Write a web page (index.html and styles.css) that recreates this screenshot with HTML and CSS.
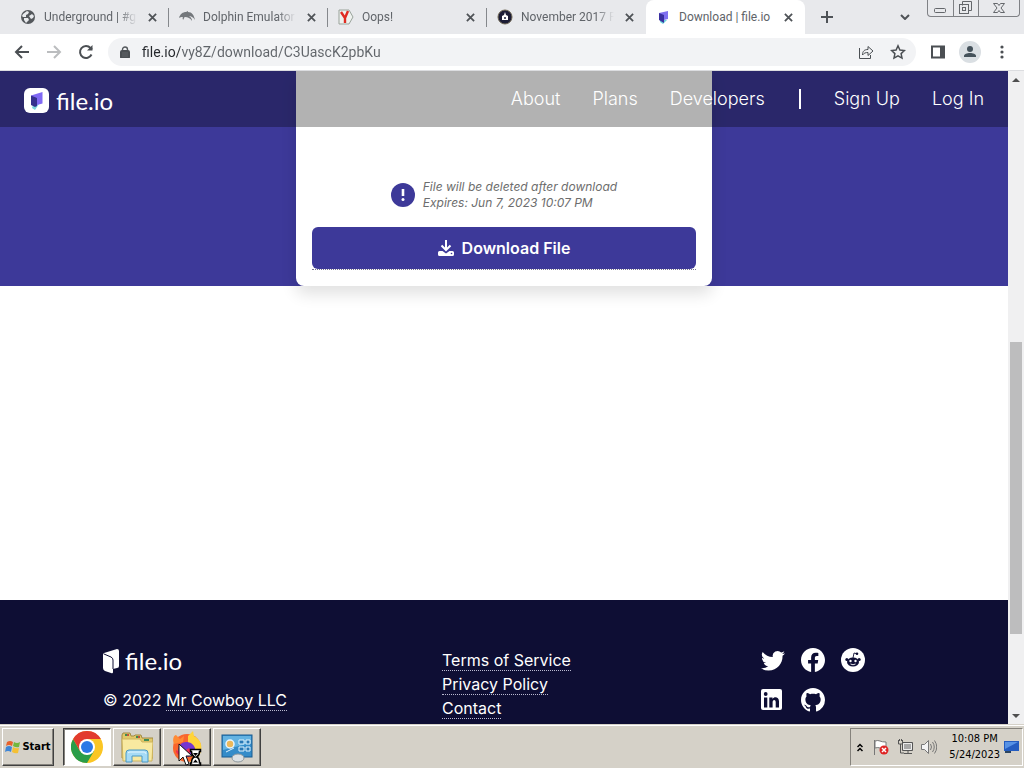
FILE: index.html
```html
<!DOCTYPE html>
<html lang="en">
<head>
<meta charset="utf-8">
<meta name="viewport" content="width=device-width, initial-scale=1">
<title>Download | file.io</title>
<link rel="stylesheet" href="styles.css">
</head>
<body>
<div class="browser">
  <div class="tabstrip">
    <div class="tabs">
      <div class="tab">
        <svg class="favicon" viewBox="0 0 16 16" aria-hidden="true"><circle cx="8" cy="8" r="7" fill="#54585c"/><path d="M3 5l4-3 2 1-1 2-2 1 0 2H3l-1-1zM9 7l3-2 2 2-1 2-2 1zM4 9l4 0 1 2-2 2-1 1-2-3z" fill="#e8eaed"/></svg>
        <a class="tab-title" href="#">Underground | #g</a>
        <button class="tab-close" aria-label="Close tab"><svg viewBox="0 0 10 10"><path d="M1 1l8 8M9 1l-8 8"/></svg></button>
      </div>
      <div class="tab">
        <svg class="favicon" viewBox="0 0 16 16" aria-hidden="true"><path d="M0 9c1-4 4-6 7-6l2-1 0 1c4 0 6 3 7 8-2-3-4-4-6-4 2 1 3 3 3 5-2-3-4-4-7-4-1 0-1 2-2 3 0-1-1-2 0-3-2 0-3 0-4 1z" fill="#74787c"/></svg>
        <a class="tab-title" href="#">Dolphin Emulator</a>
        <button class="tab-close" aria-label="Close tab"><svg viewBox="0 0 10 10"><path d="M1 1l8 8M9 1l-8 8"/></svg></button>
      </div>
      <div class="tab">
        <svg class="favicon" viewBox="0 0 16 16" aria-hidden="true"><path d="M1 1h10l4 7-4 7H1z" fill="#eef1ee" stroke="#9aa39b"/><path d="M3 3l4 6M10 2L7 9v5" fill="none" stroke="#e02b22" stroke-width="2.4"/></svg>
        <a class="tab-title" href="#">Oops!</a>
        <button class="tab-close" aria-label="Close tab"><svg viewBox="0 0 10 10"><path d="M1 1l8 8M9 1l-8 8"/></svg></button>
      </div>
      <div class="tab">
        <svg class="favicon" viewBox="0 0 16 16" aria-hidden="true"><circle cx="8" cy="8" r="7" fill="#1c1c35" stroke="#6d6552"/><path d="M8 3l1 3 2 1v4H5V7l2-1z" fill="#fff"/><circle cx="8" cy="9" r="1" fill="#1c1c35"/></svg>
        <a class="tab-title" href="#">November 2017 F</a>
        <button class="tab-close" aria-label="Close tab"><svg viewBox="0 0 10 10"><path d="M1 1l8 8M9 1l-8 8"/></svg></button>
      </div>
      <div class="tab active">
        <svg class="favicon" viewBox="0 0 16 16" aria-hidden="true"><path d="M4 11l7 0-4 4-3-2z" fill="#6fd3dd"/><path d="M3 4l9-2v8l-4 1z" fill="#7f6ff0"/><path d="M3 4l5 2v8l-5-3z" fill="#3a2fa0"/></svg>
        <a class="tab-title" href="#">Download | file.io</a>
        <button class="tab-close" aria-label="Close tab"><svg viewBox="0 0 10 10"><path d="M1 1l8 8M9 1l-8 8"/></svg></button>
      </div>
    </div>
    <button class="new-tab" aria-label="New tab"><svg viewBox="0 0 12 12"><path d="M6 0v12M0 6h12"/></svg></button>
    <button class="tab-search" aria-label="Search tabs"><svg viewBox="0 0 10 6"><path d="M1 1l4 4 4-4"/></svg></button>
    <div class="window-controls">
      <button aria-label="Minimize"><svg viewBox="0 0 24 16"><rect x="5.500" y="8.500" width="11" height="4" rx="1"/></svg></button>
      <button aria-label="Restore"><svg viewBox="0 0 24 16"><path d="M8.500 5.500v-4h9v9h-3"/><rect x="5.500" y="4.500" width="9" height="9"/><rect x="8.500" y="7.500" width="3" height="3"/></svg></button>
      <button class="win-close" aria-label="Close"><svg viewBox="0 0 24 16"><path d="M6.500 3.500h4l1.500 2 1.500-2h4l-3.500 4.500 3.500 4.500h-4l-1.500-2-1.500 2h-4l3.500-4.500z"/></svg></button>
    </div>
  </div>

  <div class="toolbar">
    <button aria-label="Back"><svg viewBox="0 0 16 16"><path d="M15 8H2M8 2L2 8l6 6"/></svg></button>
    <button class="disabled" aria-label="Forward"><svg viewBox="0 0 16 16"><path d="M1 8h13M8 2l6 6-6 6"/></svg></button>
    <button aria-label="Reload"><svg viewBox="0 0 16 16"><path d="M13.500 10.500A6 6 0 1 1 12.500 4L14 5.500"/><path d="M14.500 1v5.500H9z" fill="#4b4f53" stroke="none"/></svg></button>
    <div class="omnibox">
      <svg class="lock" viewBox="0 0 10 12" aria-hidden="true"><path d="M2.500 5V3.500a2.500 2.500 0 0 1 5 0V5" fill="none" stroke="#55595d" stroke-width="1.400"/><rect x="1" y="5" width="8" height="7" rx="1" fill="#55595d"/></svg>
      <input type="text" aria-label="Address" value="file.io/vy8Z/download/C3UascK2pbKu">
      <button aria-label="Share"><svg class="thin" viewBox="0 0 16 16"><path d="M1.500 4v10.500h11V11M4.500 11c0-4 2-5.500 5.500-5.500V2.500L15 7l-5 4.500V8.500c-2.500 0-4 .5-5.500 2.500z"/></svg></button>
      <button aria-label="Bookmark"><svg class="star" viewBox="0 0 16 16"><path d="M8 1.800l1.900 4.200 4.500.5-3.300 3.100.9 4.500L8 11.800l-4 2.300.9-4.500L1.600 6.500 6.100 6z"/></svg></button>
    </div>
    <button aria-label="Side panel"><svg viewBox="0 0 16 16"><path d="M2 2.500h12v11H2z"/><path d="M10 2h5v12h-5z" fill="#4b4f53" stroke="none"/></svg></button>
    <button class="profile" aria-label="Profile"><svg viewBox="0 0 22 22"><circle cx="11" cy="11" r="11" fill="#dadfe3"/><circle cx="11" cy="8" r="3" fill="#45525b"/><path d="M5 16v-1c0-4 12-4 12 0v1z" fill="#45525b"/></svg></button>
    <button class="menu" aria-label="Menu"><svg viewBox="0 0 16 16"><g fill="#4b4f53" stroke="none"><circle cx="8" cy="3" r="1.600"/><circle cx="8" cy="8" r="1.600"/><circle cx="8" cy="13" r="1.600"/></g></svg></button>
  </div>

  <div class="viewport">
    <div class="page">
      <header class="site-header">
        <a class="brand header-brand" href="#">
          <svg class="brand-mark" viewBox="0 0 26 26" aria-hidden="true"><rect width="25" height="25" rx="6" fill="#fff"/><path d="M9 17l6-1-4 6-3-2z" fill="#7bd6dc"/><path d="M7 7.500L18.500 4v11.500L13 17z" fill="#8069f4"/><path d="M7 7.500l6 2.500v8l-2 1-4-2z" fill="#35308d"/></svg>
          <span>file.io</span>
        </a>
        <nav class="site-nav">
          <a href="#">About</a>
          <a href="#">Plans</a>
          <a href="#">Developers</a>
          <span class="divider"></span>
          <a href="#">Sign Up</a>
          <a href="#">Log In</a>
        </nav>
      </header>

      <main>
        <section class="hero">
          <div class="card">
            <div class="notice">
              <svg viewBox="0 0 24 24" aria-hidden="true"><circle cx="12" cy="12" r="12" fill="#3d3999"/><path d="M12 6v7" stroke="#fff" stroke-width="2.600"/><circle cx="12" cy="16.500" r="1.500" fill="#fff"/></svg>
              <p>File will be deleted after download<br>Expires: Jun 7, 2023 10:07 PM</p>
            </div>
            <a class="download-link" href="#">
              <svg viewBox="0 0 16 16" aria-hidden="true"><path d="M8 0v10M3.500 5.500L8 10l4.500-4.500" fill="none" stroke="#fff" stroke-width="2"/><path d="M1.500 11h3L8 13.500 11.500 11h3a1.500 1.500 0 0 1 1.500 1.500v2a1.500 1.500 0 0 1-1.500 1.500h-13A1.500 1.500 0 0 1 0 14.500v-2A1.500 1.500 0 0 1 1.500 11z" fill="#fff"/><circle cx="13.500" cy="13.500" r=".8" fill="#3d3999"/></svg>
              Download File
            </a>
          </div>
        </section>
      </main>

      <footer class="site-footer">
        <div class="company">
          <a class="brand footer-brand" href="#">
            <svg viewBox="0 0 17 25" aria-hidden="true"><path d="M1 4l13-4q2 0 2 2v15q0 2-2 2l-4 1v3q0 2-2 1l-6-2q-2-1-2-3V6q0-1 1-2z" fill="#fff"/><path d="M1 5l7 3q2 1 2 3v9" fill="none" stroke="#0e0e34"/></svg>
            <span>file.io</span>
          </a>
          <p>© 2022 <a class="dotted" href="#">Mr Cowboy LLC</a></p>
        </div>
        <ul class="legal">
          <li><a class="dotted" href="#">Terms of Service</a></li>
          <li><a class="dotted" href="#">Privacy Policy</a></li>
          <li><a class="dotted" href="#">Contact</a></li>
        </ul>
        <div class="social">
          <a href="#" aria-label="Twitter"><svg viewBox="0 0 16 16"><path d="M5.026 15c6.038 0 9.341-5.003 9.341-9.334 0-.14 0-.282-.006-.422A6.685 6.685 0 0 0 16 3.542a6.658 6.658 0 0 1-1.889.518 3.301 3.301 0 0 0 1.447-1.817 6.533 6.533 0 0 1-2.087.793A3.286 3.286 0 0 0 7.875 6.03a9.325 9.325 0 0 1-6.767-3.429 3.289 3.289 0 0 0 1.018 4.382A3.323 3.323 0 0 1 .64 6.575v.045a3.288 3.288 0 0 0 2.632 3.218 3.203 3.203 0 0 1-.865.115 3.23 3.23 0 0 1-.614-.057 3.283 3.283 0 0 0 3.067 2.277A6.588 6.588 0 0 1 .78 13.58a6.32 6.32 0 0 1-.78-.045A9.344 9.344 0 0 0 5.026 15z"/></svg></a>
          <a href="#" aria-label="Facebook"><svg viewBox="0 0 16 16"><path d="M16 8.049c0-4.446-3.582-8.05-8-8.05C3.58 0-.002 3.603-.002 8.05c0 4.017 2.926 7.347 6.75 7.951v-5.625h-2.03V8.05H6.75V6.275c0-2.017 1.195-3.131 3.022-3.131.876 0 1.791.157 1.791.157v1.98h-1.009c-.993 0-1.303.621-1.303 1.258v1.51h2.218l-.354 2.326H9.25V16c3.824-.604 6.75-3.934 6.75-7.951z"/></svg></a>
          <a href="#" aria-label="Reddit"><svg viewBox="0 0 24 24"><circle cx="12" cy="12" r="12"/><g fill="#0e0e34"><ellipse cx="12" cy="14" rx="6" ry="4.500"/><circle cx="5.800" cy="11.500" r="1.500"/><circle cx="18.200" cy="11.500" r="1.500"/><circle cx="16" cy="5.800" r="1.300"/></g><path d="M12 10l1-5 3 .8" fill="none" stroke="#0e0e34" stroke-width=".9"/><circle cx="9.500" cy="13" r="1.200"/><circle cx="14.500" cy="13" r="1.200"/><path d="M9.500 16q2.500 1.500 5 0" fill="none" stroke="#fff" stroke-width=".9"/></svg></a>
          <a href="#" aria-label="LinkedIn"><svg viewBox="0 0 24 24"><rect x="0" y="1" width="21" height="21" rx="2"/><g fill="#0e0e34"><circle cx="4.700" cy="6" r="1.900"/><path d="M3 9.500h3.300V19.500H3zM8.300 9.500h3.200v1.400c1.600-2.600 6.500-2.200 6.500 2.400v6.200h-3.300v-5.300c0-3-3.100-2.600-3.100 0v5.300H8.300z"/></g></svg></a>
          <a href="#" aria-label="GitHub"><svg viewBox="0 0 16 16"><path d="M8 0C3.580 0 0 3.580 0 8c0 3.540 2.290 6.530 5.470 7.590.4.070.55-.17.55-.38 0-.19-.01-.82-.01-1.490-2.010.37-2.530-.49-2.690-.94-.09-.23-.48-.94-.82-1.130-.28-.15-.68-.52-.01-.53.63-.01 1.080.58 1.230.82.72 1.210 1.870.87 2.330.66.07-.52.28-.87.51-1.070-1.780-.2-3.640-.89-3.640-3.950 0-.87.31-1.590.82-2.150-.08-.2-.36-1.020.08-2.120 0 0 .67-.21 2.200.82.64-.18 1.320-.27 2-.27.68 0 1.360.09 2 .27 1.530-1.040 2.200-.82 2.200-.82.44 1.100.16 1.920.08 2.120.51.56.82 1.270.82 2.150 0 3.070-1.870 3.750-3.650 3.950.29.25.54.73.54 1.480 0 1.070-.01 1.930-.01 2.200 0 .21.15.46.55.38A8.012 8.012 0 0 0 16 8c0-4.420-3.580-8-8-8z"/></svg></a>
        </div>
      </footer>
    </div>
    <div class="scrollbar">
      <button aria-label="Scroll up"><svg viewBox="0 0 8 4"><path d="M0 4l4-4 4 4z"/></svg></button>
      <div class="track-above"></div>
      <div class="thumb"></div>
      <div class="track-below"></div>
      <button aria-label="Scroll down"><svg viewBox="0 0 8 4"><path d="M0 0l4 4 4-4z"/></svg></button>
    </div>
  </div>
</div>

<div class="taskbar">
  <button class="start">
    <svg viewBox="0 0 16 16" aria-hidden="true"><path d="M2 3q3-2 6 0L7 7Q4 5 1 7z" fill="#e8622c"/><path d="M9 3q3 2 6 0l-1 5q-3 1-6-1z" fill="#72b83e"/><path d="M1 8q3-2 6 0l-1 5q-3-2-6 0z" fill="#3f86d6"/><path d="M8 8q3 2 6 1l-1 5q-3 1-6-1z" fill="#f4c034"/></svg>
    Start
  </button>
  <div class="tasks">
    <button class="task current" aria-label="Google Chrome"><svg viewBox="0 0 32 32"><circle cx="16" cy="16" r="16" fill="#fbc624"/><path d="M2.140 8A16 16 0 0 0 16 32l7-12-7-4-7 4z" fill="#2a9d49"/><path d="M2.140 8L9 20l7-12h13.860A16 16 0 0 0 2.140 8z" fill="#e23b2e"/><circle cx="16" cy="16" r="8" fill="#fff"/><circle cx="16" cy="16" r="6" fill="#2b78e6"/></svg></button>
    <button class="task" aria-label="File Explorer"><svg viewBox="0 0 32 32"><path d="M1 4l1-2h7l1 3h3l1-1h6l1 3h11v20H1z" fill="#e2c869" stroke="#a18a42"/><path d="M4 4h4M15 6h4M23 9h5" stroke="#3c8b57" stroke-width="2"/><path d="M6 4h2M17 6h2" stroke="#c5533d" stroke-width="2"/><path d="M1 8h18l2 3h11l-1 19H2z" fill="#f8e9a0" stroke="#cdb45f"/><path d="M5 31V22q0-3 3-3h16q3 0 3 3v9h-6v-6H11v6z" fill="#a6dbf5" stroke="#4998c5"/><path d="M7 22q1-1 2-1h14q2 0 2 2" fill="none" stroke="#e3f6ff"/></svg></button>
    <button class="task" aria-label="Firefox"><svg viewBox="0 0 32 32"><circle cx="16" cy="17" r="14" fill="#f9652d"/><path d="M17 5l5-5 1 5c7 4 9 10 6 18-2 4-5 7-10 8 6-9 5-16-2-19z" fill="#ffd43a"/><path d="M3 13c-2-5 0-9 2-9l4 4 4-3-1 6z" fill="#ff8b35"/><path d="M9 14c3-5 13-4 15 3 1 6-6 11-12 8-5-2-6-7-3-11z" fill="#7636cf"/><path d="M5 19c5 3 9 1 13-2l2 3c-3 6-12 7-15 1z" fill="#ed3053"/></svg></button>
    <button class="task" aria-label="Control Panel"><svg viewBox="0 0 32 32"><rect x="1" y="4" width="30" height="22" fill="#358cc9" stroke="#1a5c91"/><path d="M2 5h28v7L2 19z" fill="#64b3e2"/><circle cx="9" cy="13" r="4" fill="#edb85a" stroke="#e7f6ff" stroke-width="1.500"/><path d="M5 21l8-4M18 9h5v4h-5zM25 9h4v4h-4zM18 16h5v4h-5zM25 16h4v4h-4z" fill="#2878b5" stroke="#dff3ff"/><ellipse cx="17" cy="27" rx="6" ry="4" fill="#dce1e4" stroke="#8d969b"/></svg></button>
    <svg class="cursor" viewBox="0 0 24 24" aria-hidden="true"><path d="M1 0v17l4-4 3 8 3-1-3-8h6z" fill="#fff" stroke="#111"/><path d="M12.500 5.500h10v2h-1q0 4-3 5.500 3 1 3 6h1v2h-10v-2h1q0-5 3-6-3-1.500-3-5.500h-1z" fill="#fff" stroke="#000" stroke-width="1.500"/><path d="M15 9h5l-2.500 3zM15 18.500l2.500-3 2.500 3z"/></svg>
  </div>
  <div class="tray">
    <button aria-label="Show hidden icons"><svg class="chevrons" viewBox="0 0 6 9"><path d="M.5 4L3 1.500 5.500 4M.5 8L3 5.500 5.500 8"/></svg></button>
    <button aria-label="Action Center"><svg viewBox="0 0 16 16"><path d="M1.500 1v15M2 2q3-1 5 0t6 1v7q-4 0-6-1T2 9z" fill="#fff" stroke="#777"/><circle cx="11" cy="11" r="4.500" fill="#df2525"/><path d="M9 9l4 4M13 9l-4 4" stroke="#fff" stroke-width="1.500"/></svg></button>
    <button aria-label="Network"><svg viewBox="0 0 16 16"><path d="M5.500 3.500h10v8h-10z" fill="#a8a8a8" stroke="#555"/><path d="M6.500 4.500h8v6h-8z" fill="none" stroke="#eee"/><path d="M7 14.500h8M11 12v2M1.500 1v4h4V1M3.500 5v9H7M2.500 0v2M4.500 0v2" fill="none" stroke="#555"/></svg></button>
    <button aria-label="Volume"><svg viewBox="0 0 16 16"><path d="M.5 5.500h3l4-4v13l-4-4h-3z" fill="#f3f3f3" stroke="#777"/><path d="M9.500 5q2 3 0 6M11.500 3q3.500 5 0 10M13.500 1.500q4.500 6.500 0 13" fill="none" stroke="#777"/></svg></button>
    <time class="clock">10:08 PM<br>5/24/2023</time>
    <button class="show-desktop" aria-label="Show desktop"><svg viewBox="0 0 15 12"><path d="M0 0h15v10H0z" fill="#245cc0"/><path d="M1 1h13L1 8z" fill="#5792e5"/><path d="M1 11h6" stroke="#2d455f" stroke-width="2"/></svg></button>
  </div>
</div>
</body>
</html>
```

FILE: styles.css
```css
* { box-sizing: border-box; }

body {
  margin: 0;
  display: flex;
  flex-direction: column;
  height: 100vh;
  overflow: hidden;
  font-family: Inter, "Liberation Sans", sans-serif;
  background: #fff;
}

button {
  display: flex;
  align-items: center;
  justify-content: center;
  padding: 0;
  border: 0;
  background: none;
  font: inherit;
  color: inherit;
}

a { color: inherit; text-decoration: none; }
svg { display: block; flex: none; }

.browser { flex: 1; min-height: 0; display: flex; flex-direction: column; }

/* Tab strip */
.tabstrip {
  display: flex;
  height: 34px;
  padding-left: 10px;
  padding-right: 4px;
  background: #e8e9ec;
  color: #606469;
  font: 12px/16px Roboto, "Noto Sans", sans-serif;
}
.tabs { display: flex; flex: 0 1 795px; min-width: 0; }
.tab {
  position: relative;
  flex: 1;
  min-width: 0;
  display: flex;
  align-items: center;
  gap: 8px;
  padding: 0 10px;
}
.tab:not(.active)::after {
  content: "";
  position: absolute;
  right: 0;
  top: 8px;
  width: 1px;
  height: 19px;
  background: #85888c;
}
.tab:nth-last-child(2)::after { display: none; }
.tab.active { background: #fff; border-radius: 8px 8px 0 0; }
.favicon { width: 16px; height: 16px; }
.tab-title {
  flex: 1;
  min-width: 0;
  overflow: hidden;
  white-space: nowrap;
  mask-image: linear-gradient(to right, #000 80%, transparent);
}
.tab.active { gap: 7px; }
.active .tab-title { mask-image: none; }
.tab-close { width: 14px; height: 16px; }
.tab-close svg { width: 9px; height: 9px; }
.tab-close svg, .new-tab svg, .tab-search svg { fill: none; stroke: #4f5357; stroke-width: 2; }
.new-tab { width: 44px; }
.new-tab svg { width: 12px; height: 12px; }
.tab-search { width: 30px; margin-left: auto; }
.tab-search svg { width: 10px; height: 6px; }
.window-controls {
  display: flex;
  align-self: flex-start;
  height: 17px;
  margin-left: 7px;
  border: 1px solid #7f8185;
  border-top: 0;
  border-radius: 0 0 4px 4px;
}
.window-controls button { width: 25px; }
.window-controls button + button { border-left: 1px solid #7f8185; }
.window-controls .win-close { width: 41px; }
.window-controls svg { width: 24px; height: 16px; fill: none; stroke: #64676b; }

/* Toolbar */
.toolbar {
  display: flex;
  align-items: center;
  height: 37px;
  padding: 0 6px;
  background: #fff;
  border-bottom: 1px solid #dcdde0;
}
.toolbar button { width: 32px; height: 28px; }
.toolbar svg { width: 16px; height: 16px; fill: none; stroke: #4b4f53; stroke-width: 2; }
.toolbar .disabled svg { stroke: #bbbdbf; }
.toolbar .omnibox {
  flex: 1;
  min-width: 0;
  display: flex;
  align-items: center;
  height: 28px;
  margin: 0 6px;
  padding: 0 2px 0 12px;
  border-radius: 14px;
  background: #f2f3f5;
}
.toolbar .lock { width: 10px; height: 12px; }
.omnibox input {
  flex: 1;
  min-width: 0;
  margin-left: 12px;
  padding: 0;
  border: 0;
  font: 14px/20px Roboto, "Noto Sans", sans-serif;
  color: transparent;
  background: linear-gradient(to right, #24272b 38px, #606469 38px);
  background-clip: text;
}
.toolbar .thin { stroke-width: 1; }
.toolbar .star { stroke-width: 1.5; }
.toolbar .profile svg { width: 22px; height: 22px; stroke: none; }

/* Web page and its scrollbar */
.viewport { flex: 1; min-height: 0; display: flex; }
.page {
  position: relative;
  flex: 1;
  min-width: 0;
  display: flex;
  flex-direction: column;
  overflow: hidden;
}
.site-header {
  position: absolute;
  inset: 0 0 auto;
  z-index: 2;
  display: flex;
  align-items: center;
  justify-content: space-between;
  height: 56px;
  padding: 0 24px;
  background: rgba(0, 0, 0, .3);
  color: #fff;
}
.brand {
  display: flex;
  align-items: center;
  gap: 6px;
  font: 24px/32px Lato, sans-serif;
  color: #fff;
}
.header-brand { padding-top: 3px; }
.brand-mark { width: 26px; height: 26px; }
.site-nav {
  display: flex;
  align-items: center;
  gap: 32px;
  font-size: 18px;
  line-height: 24px;
  font-weight: 300;
}
.divider { width: 2px; height: 20px; background: #fff; margin: 0 1px 0 2px; }

main { flex: 1; }
.hero {
  display: flex;
  justify-content: center;
  background: #3d3999;
}
.card {
  width: 416px;
  padding: 108px 16px 16px;
  border-radius: 0 0 8px 8px;
  background: #fff;
  box-shadow: 0 8px 16px rgba(0, 0, 0, .12);
}
.notice {
  display: flex;
  align-items: center;
  justify-content: center;
  gap: 8px;
  margin-bottom: 16px;
  color: #6d6d6d;
  font-size: 12px;
  line-height: 16px;
  font-style: italic;
}
.notice svg { width: 24px; height: 24px; }
.notice p { margin: 0; }
.download-link {
  display: flex;
  align-items: center;
  justify-content: center;
  gap: 8px;
  height: 42px;
  border-radius: 6px;
  background: #3d3999;
  color: #fff;
  font-size: 16px;
  font-weight: 600;
  position: relative;
  margin-bottom: 1px;
}
.download-link::after {
  content: "";
  position: absolute;
  inset: auto 0 -1px;
  border-bottom: 1px dotted #77758f;
}
.download-link svg { width: 16px; height: 16px; }

.site-footer {
  display: grid;
  grid-template-columns: 339px 319px 1fr;
  height: 124px;
  padding: 48px 103px 0;
  overflow: hidden;
  background: #0e0e34;
  color: #fff;
  font-size: 16px;
  line-height: 24px;
}
.footer-brand { gap: 5px; line-height: 26px; }
.footer-brand svg { width: 17px; height: 25px; }
.company p { margin: 14px 0 0; }
.dotted { border-bottom: 1px dotted #b9b9d0; }
.legal { margin: 0; padding: 0; list-style: none; }
.social {
  display: grid;
  grid-template-columns: repeat(3, 24px);
  grid-auto-rows: 24px;
  gap: 16px;
}
.social svg { width: 24px; height: 24px; fill: #fff; }

.scrollbar {
  display: flex;
  flex-direction: column;
  align-items: center;
  width: 16px;
  background: #f0f0f1;
}
.scrollbar button { width: 16px; height: 17px; }
.scrollbar svg { width: 8px; height: 4px; fill: #4f4f4f; }
.track-above { flex: 254; }
.thumb { flex: 292; width: 12px; background: #bdbdbe; }
.track-below { flex: 73; }

/* Taskbar */
.taskbar {
  display: flex;
  align-items: stretch;
  height: 44px;
  padding: 1px 1px 2px 2px;
  border-top: 1px solid #d5d1c8;
  box-shadow: inset 0 1px #fff;
  background: #d5d1c8;
  color: #000;
  font: 11px/16px "DejaVu Sans Condensed", "DejaVu Sans", sans-serif;
}
.start, .task {
  margin-top: 2px;
  border: 1px solid;
  border-color: #fff #404040 #404040 #fff;
  box-shadow: inset -1px -1px #85827c;
}
.start { width: 52px; gap: 1px; font-weight: bold; }
.start svg { width: 16px; height: 16px; }
.tasks { position: relative; display: flex; gap: 2px; margin-left: 9px; }
.task { width: 48px; }
.task svg { width: 32px; height: 32px; }
.task.current {
  background: #fff;
  border-color: #404040 #fff #fff #404040;
  box-shadow: inset 1px 1px #85827c;
}
.cursor { position: absolute; left: 115px; top: 18px; width: 24px; height: 24px; }
.tray {
  display: flex;
  align-items: center;
  gap: 8px;
  margin-top: 2px;
  margin-left: auto;
  padding: 0 3px 0 6px;
  border: 1px solid;
  border-color: #85827c #fff #fff #85827c;
}
.tray svg { width: 16px; height: 16px; }
.tray .chevrons { width: 6px; height: 9px; fill: none; stroke: #000; stroke-width: 1.5; margin-right: 2px; }
.clock { text-align: center; margin-left: 4px; }
.tray .show-desktop { margin-left: -4px; }
.tray .show-desktop svg { width: 15px; height: 12px; }
```
